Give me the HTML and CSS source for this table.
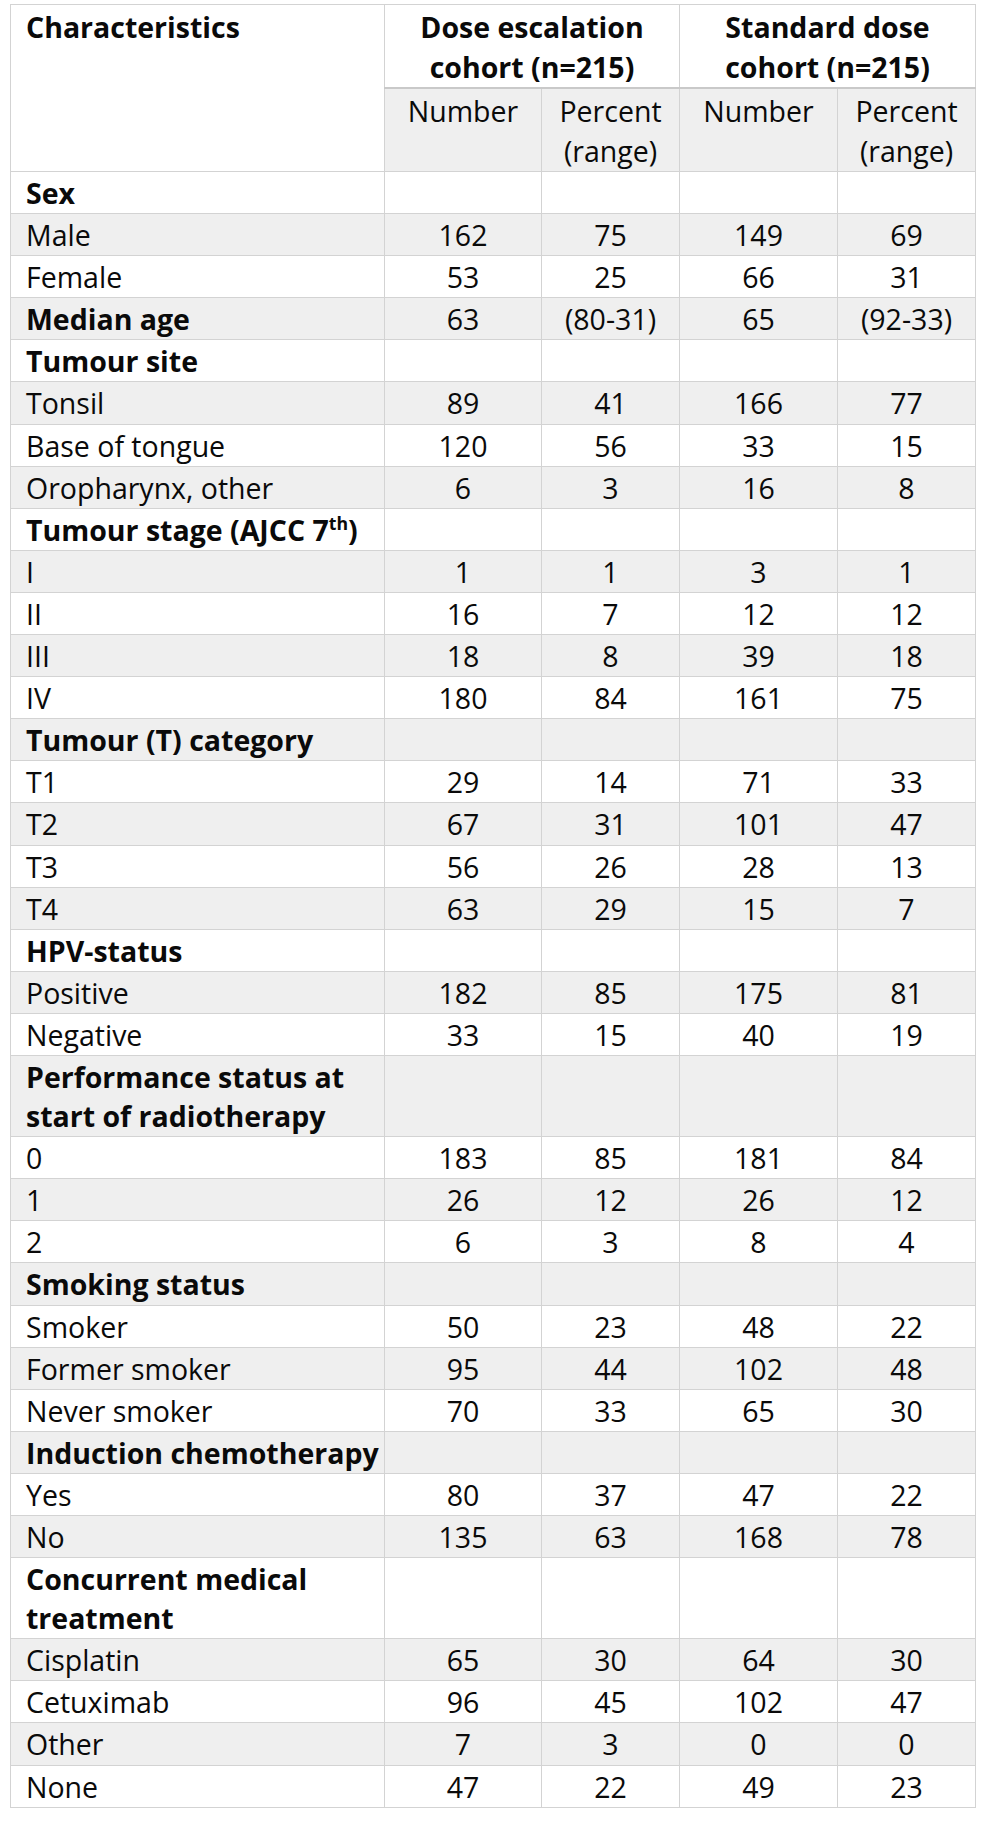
FILE: index.html
```html
<!DOCTYPE html>
<html lang="en">
<head>
<meta charset="utf-8">
<title>Patient characteristics</title>
<link rel="stylesheet" href="styles.css">
</head>
<body>
<table class="tbl">
  <colgroup>
    <col class="c-label">
    <col class="c-num">
    <col class="c-pct">
    <col class="c-num2">
    <col class="c-pct2">
  </colgroup>
  <thead>
    <tr class="h1">
      <th class="lbl" rowspan="2">Characteristics</th>
      <th class="grp" colspan="2">Dose escalation<br>cohort (n=215)</th>
      <th class="grp" colspan="2">Standard dose<br>cohort (n=215)</th>
    </tr>
    <tr class="h2">
      <th class="sub">Number</th>
      <th class="sub">Percent<br>(range)</th>
      <th class="sub">Number</th>
      <th class="sub">Percent<br>(range)</th>
    </tr>
  </thead>
  <tbody>
    <tr class="cat"><td>Sex</td><td></td><td></td><td></td><td></td></tr>
    <tr class="alt"><td>Male</td><td>162</td><td>75</td><td>149</td><td>69</td></tr>
    <tr><td>Female</td><td>53</td><td>25</td><td>66</td><td>31</td></tr>
    <tr class="cat alt"><td>Median age</td><td class="n">63</td><td class="n">(80-31)</td><td class="n">65</td><td class="n">(92-33)</td></tr>
    <tr class="cat"><td>Tumour site</td><td></td><td></td><td></td><td></td></tr>
    <tr class="alt"><td>Tonsil</td><td>89</td><td>41</td><td>166</td><td>77</td></tr>
    <tr><td>Base of tongue</td><td>120</td><td>56</td><td>33</td><td>15</td></tr>
    <tr class="alt"><td>Oropharynx, other</td><td>6</td><td>3</td><td>16</td><td>8</td></tr>
    <tr class="cat"><td>Tumour stage (AJCC 7<sup>th</sup>)</td><td></td><td></td><td></td><td></td></tr>
    <tr class="alt"><td>I</td><td>1</td><td>1</td><td>3</td><td>1</td></tr>
    <tr><td>II</td><td>16</td><td>7</td><td>12</td><td>12</td></tr>
    <tr class="alt"><td>III</td><td>18</td><td>8</td><td>39</td><td>18</td></tr>
    <tr><td>IV</td><td>180</td><td>84</td><td>161</td><td>75</td></tr>
    <tr class="cat alt"><td>Tumour (T) category</td><td></td><td></td><td></td><td></td></tr>
    <tr><td>T1</td><td>29</td><td>14</td><td>71</td><td>33</td></tr>
    <tr class="alt"><td>T2</td><td>67</td><td>31</td><td>101</td><td>47</td></tr>
    <tr><td>T3</td><td>56</td><td>26</td><td>28</td><td>13</td></tr>
    <tr class="alt"><td>T4</td><td>63</td><td>29</td><td>15</td><td>7</td></tr>
    <tr class="cat"><td>HPV-status</td><td></td><td></td><td></td><td></td></tr>
    <tr class="alt"><td>Positive</td><td>182</td><td>85</td><td>175</td><td>81</td></tr>
    <tr><td>Negative</td><td>33</td><td>15</td><td>40</td><td>19</td></tr>
    <tr class="cat alt"><td>Performance status at<br>start of radiotherapy</td><td></td><td></td><td></td><td></td></tr>
    <tr><td>0</td><td>183</td><td>85</td><td>181</td><td>84</td></tr>
    <tr class="alt"><td>1</td><td>26</td><td>12</td><td>26</td><td>12</td></tr>
    <tr><td>2</td><td>6</td><td>3</td><td>8</td><td>4</td></tr>
    <tr class="cat alt"><td>Smoking status</td><td></td><td></td><td></td><td></td></tr>
    <tr><td>Smoker</td><td>50</td><td>23</td><td>48</td><td>22</td></tr>
    <tr class="alt"><td>Former smoker</td><td>95</td><td>44</td><td>102</td><td>48</td></tr>
    <tr><td>Never smoker</td><td>70</td><td>33</td><td>65</td><td>30</td></tr>
    <tr class="cat alt"><td>Induction chemotherapy</td><td></td><td></td><td></td><td></td></tr>
    <tr><td>Yes</td><td>80</td><td>37</td><td>47</td><td>22</td></tr>
    <tr class="alt"><td>No</td><td>135</td><td>63</td><td>168</td><td>78</td></tr>
    <tr class="cat"><td>Concurrent medical<br>treatment</td><td></td><td></td><td></td><td></td></tr>
    <tr class="alt"><td>Cisplatin</td><td>65</td><td>30</td><td>64</td><td>30</td></tr>
    <tr><td>Cetuximab</td><td>96</td><td>45</td><td>102</td><td>47</td></tr>
    <tr class="alt"><td>Other</td><td>7</td><td>3</td><td>0</td><td>0</td></tr>
    <tr><td>None</td><td>47</td><td>22</td><td>49</td><td>23</td></tr>
  </tbody>
</table>
</body>
</html>
```
FILE: styles.css
```css
html, body {
  margin: 0;
  padding: 0;
  background: #ffffff;
}

body {
  padding: 4px 0 0 10px;
  font-family: "Open Sans", "Noto Sans", "Liberation Sans", sans-serif;
  font-size: 28.5px;
  color: #0a0a0a;
}

.tbl {
  border-collapse: collapse;
  table-layout: fixed;
  width: 965px;
}

.c-label { width: 374px; }
.c-num   { width: 157px; }
.c-pct   { width: 138px; }
.c-num2  { width: 158px; }
.c-pct2  { width: 138px; }

.tbl th,
.tbl td {
  border: 1px solid #d3d3d3;
  padding: 2px 0 0 0;
  line-height: 39.1px;
  vertical-align: top;
  text-align: center;
  font-weight: 400;
}

.tbl th.lbl,
.tbl td:first-child {
  text-align: left;
  padding-left: 15px;
}

.tbl th.lbl,
.tbl th.grp {
  font-weight: 700;
}

.tbl th.grp {
  border-bottom: 2px solid #c9c9c9;
  padding-top: 2px;
  line-height: 40px;
}

.tbl th.lbl {
  padding-top: 2px;
  line-height: 40px;
}

.tbl th.sub {
  background: #efefef;
  padding-top: 2px;
  line-height: 40px;
}

.tbl tr.alt td {
  background: #efefef;
}

.tbl tr.cat td:first-child {
  font-weight: 700;
}

.tbl tr.cat td.n {
  font-weight: 400;
}

.tbl sup {
  font-size: 0.62em;
  line-height: 0;
  vertical-align: 0.62em;
}
```
